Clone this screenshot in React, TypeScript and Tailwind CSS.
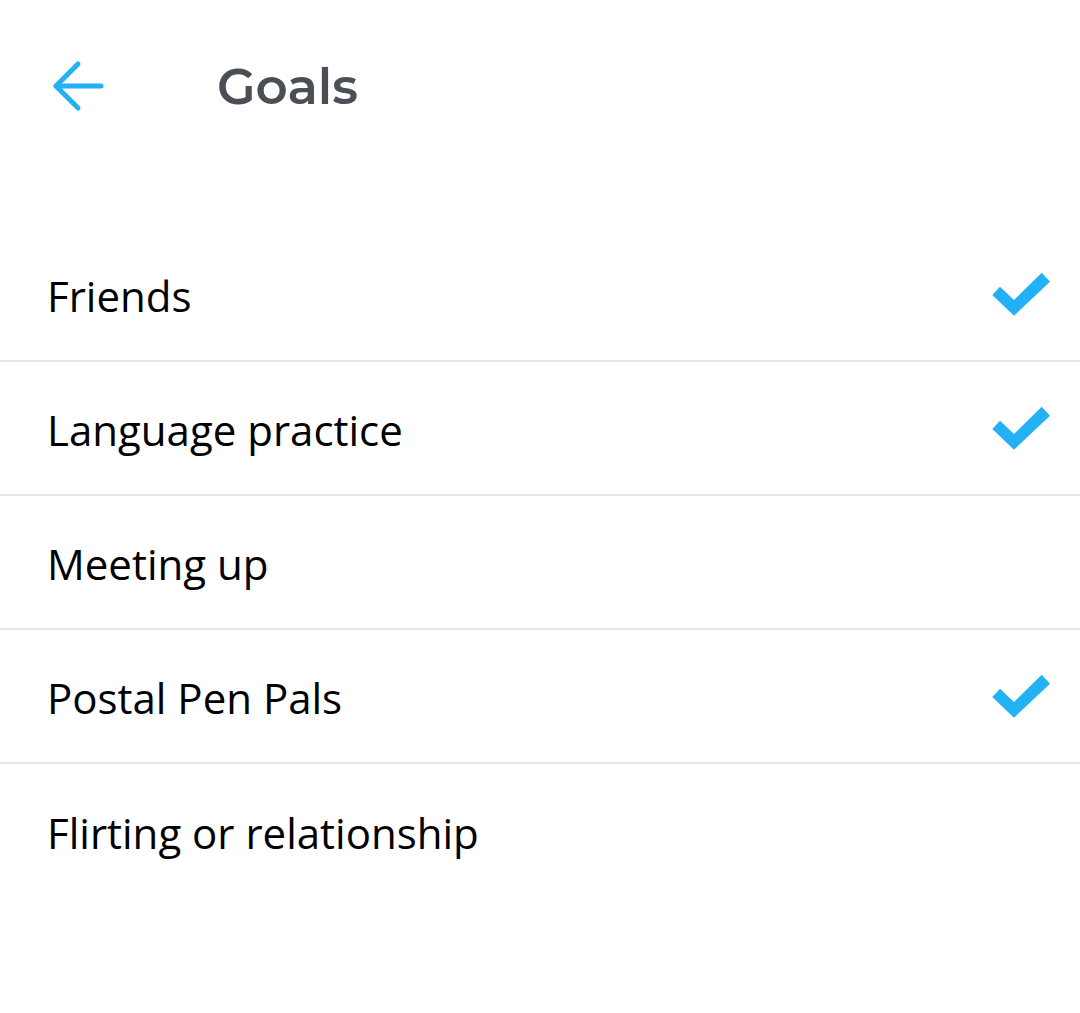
import React from "react";

const items: { label: string; checked: boolean }[] = [
  { label: "Friends", checked: true },
  { label: "Language practice", checked: true },
  { label: "Meeting up", checked: false },
  { label: "Postal Pen Pals", checked: true },
  { label: "Flirting or relationship", checked: false },
];

function Check() {
  return (
    <svg width="64" height="52" viewBox="0 0 64 52" className="block">
      <polygon
        points="3.3,27 11,18.7 25,32 52.7,4.7 61,13.7 25,47.7"
        fill="#22b1f4"
      />
    </svg>
  );
}

export default function App() {
  return (
    <div className="w-[1080px] h-[1013px] bg-white overflow-hidden">
      <div className="h-[172px] flex items-center">
        <svg width="60" height="60" viewBox="0 0 60 60" className="ml-[48px] block">
          <g fill="none" stroke="#22b1f4" strokeWidth="5" strokeLinecap="round" strokeLinejoin="round">
            <path d="M8 30 H53" />
            <path d="M30 8 L8 30 L30 52" />
          </g>
        </svg>
        <div
          className="ml-[109px] text-[50px] font-semibold text-[#4a4f56]"
          style={{ fontFamily: "Montserrat, Inter, 'Noto Sans', sans-serif" }}
        >
          Goals
        </div>
      </div>
      <div className="mt-[56px]">
        {items.map((it, i) => (
          <div
            key={it.label}
            className={`h-[134px] flex items-center justify-between pl-[47px] pr-[27px] ${
              i < items.length - 1 ? "border-b-2 border-[#e6e6e6]" : ""
            }`}
          >
            <span
              className="text-[42px] text-black pt-[3px]"
              style={{ fontFamily: "'Open Sans', 'Noto Sans', sans-serif" }}
            >
              {it.label}
            </span>
            {it.checked && <Check />}
          </div>
        ))}
      </div>
    </div>
  );
}
